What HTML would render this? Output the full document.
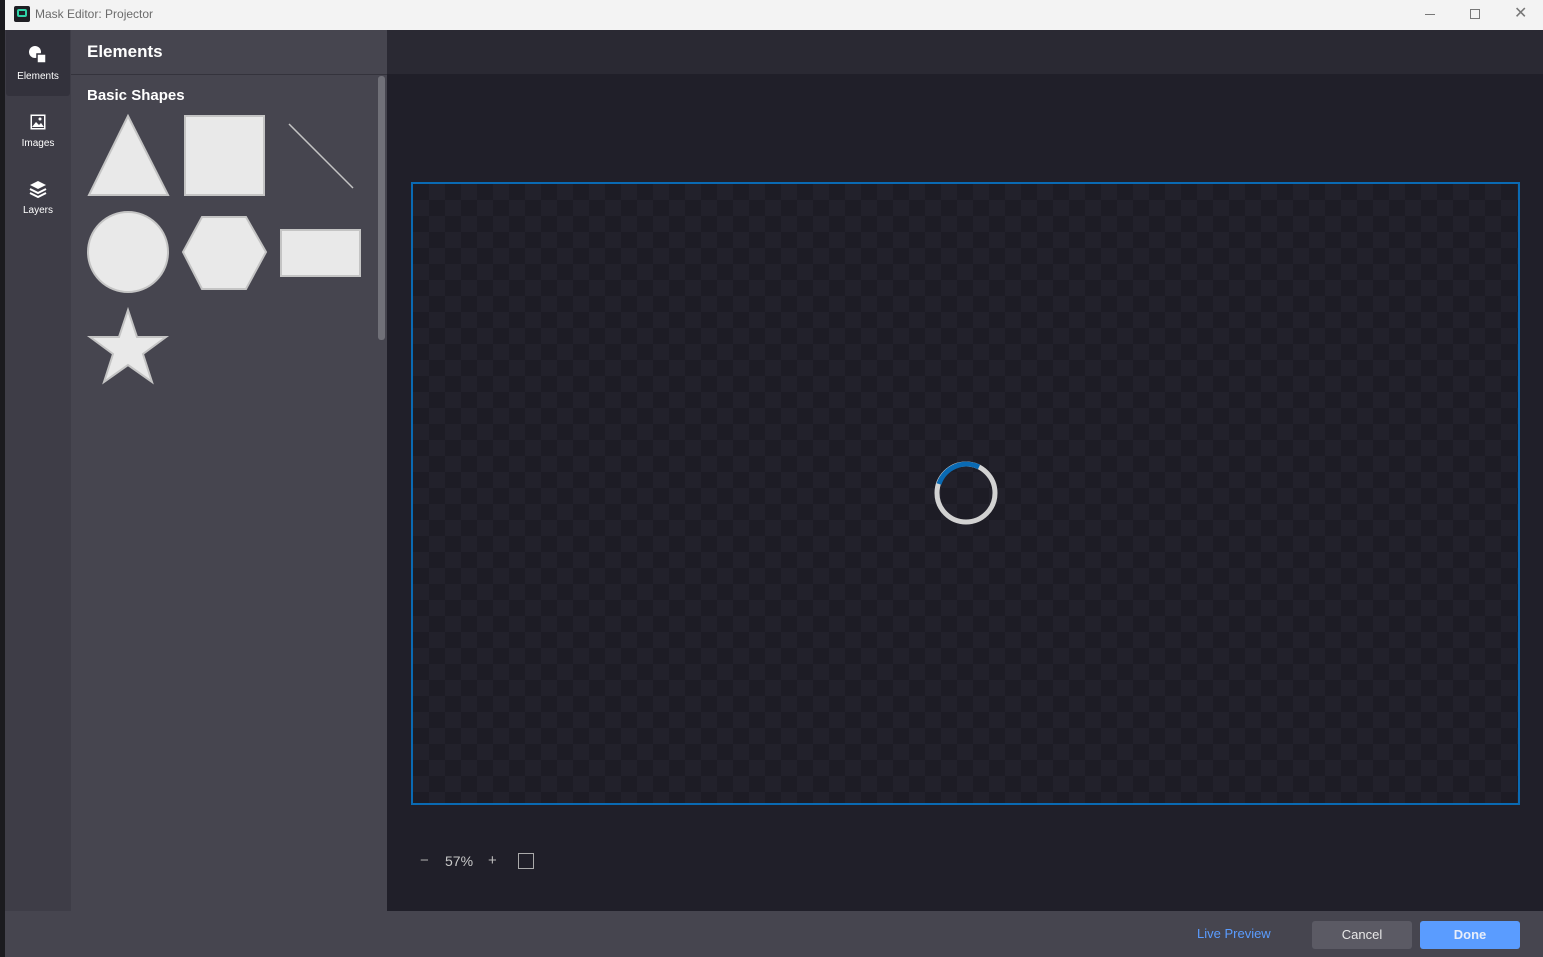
<!DOCTYPE html>
<html><head><meta charset="utf-8"><style>
*{margin:0;padding:0;box-sizing:border-box}
body{width:1543px;height:957px;overflow:hidden;background:#f3f3f3;font-family:"Liberation Sans",sans-serif;position:relative}
.abs{position:absolute}
</style></head><body>
<div class="abs" style="left:0;top:0;width:5px;height:957px;background:#1b1b1f"></div>
<div class="abs" style="left:5px;top:0;width:1538px;height:30px;background:#f3f3f3"></div>
<div class="abs" style="left:14px;top:6px;width:16px;height:16px;background:#1f1f24;border-radius:2px">
 <div class="abs" style="left:3px;top:3px;width:10px;height:8px;border:2px solid #2fd4a8;border-radius:2px"></div></div>
<div class="abs" style="left:35px;top:7px;font-size:12px;color:#6b6b6b">Mask Editor: Projector</div>
<div class="abs" style="left:1425px;top:14px;width:10px;height:1px;background:#777"></div>
<div class="abs" style="left:1470px;top:9px;width:10px;height:10px;border:1px solid #777"></div>
<div class="abs" style="left:1514px;top:3px;font-size:16px;color:#777">✕</div>

<div class="abs" style="left:5px;top:30px;width:66px;height:881px;background:#3e3d47"></div>
<div class="abs" style="left:6px;top:30px;width:64px;height:66px;background:#33323c;border-radius:0 0 3px 3px"></div>
<svg class="abs" style="left:28px;top:45px" width="20" height="20"><circle cx="7" cy="7" r="6" fill="#fff"/><rect x="9" y="9" width="9" height="9" fill="#fff" stroke="#33323c" stroke-width="1.5"/></svg>
<div class="abs" style="left:6px;top:71px;width:64px;text-align:center;font-size:10px;color:#fff">Elements</div>
<svg class="abs" style="left:30px;top:114px" width="16" height="16"><rect x="0.5" y="0.5" width="15" height="15" fill="#fff"/><rect x="2" y="2" width="12" height="12" fill="#3e3d47"/><path d="M2 13 L6 8 L9 11 L11 9 L14 13Z" fill="#fff"/><circle cx="10" cy="5" r="1.5" fill="#fff"/></svg>
<div class="abs" style="left:6px;top:138px;width:64px;text-align:center;font-size:10px;color:#fff">Images</div>
<svg class="abs" style="left:29px;top:180px" width="18" height="18"><path d="M9 1 L17 5 L9 9 L1 5Z" fill="#fff"/><path d="M1 9 L9 13 L17 9" fill="none" stroke="#fff" stroke-width="2"/><path d="M1 13 L9 17 L17 13" fill="none" stroke="#fff" stroke-width="2"/></svg>
<div class="abs" style="left:6px;top:205px;width:64px;text-align:center;font-size:10px;color:#fff">Layers</div>

<div class="abs" style="left:71px;top:30px;width:316px;height:881px;background:#46454f"></div>
<div class="abs" style="left:71px;top:74px;width:316px;height:1px;background:#34333c"></div>
<div class="abs" style="left:87px;top:42px;font-size:17px;font-weight:bold;color:#fff">Elements</div>
<div class="abs" style="left:87px;top:87px;font-size:15px;font-weight:bold;color:#fff">Basic Shapes</div>
<div class="abs" style="left:378px;top:76px;width:7px;height:264px;background:#707078;border-radius:3px"></div>
<svg class="abs" style="left:80px;top:110px" width="290" height="280">
 <g fill="#e9e9e9" stroke="#c4c4c4" stroke-width="2">
 <polygon points="48,6 88,85 9,85"/>
 <rect x="105" y="6" width="79" height="79"/>
 <line x1="209" y1="14" x2="273" y2="78" stroke-width="1.5"/>
 <circle cx="48" cy="142" r="40"/>
 <polygon points="122,107 166,107 186,142 166,179 122,179 103,142"/>
 <rect x="201" y="120" width="79" height="46"/>
 <polygon points="48,200 57,227 86,227 63,244 72,272 48,255 24,272 33,244 10,227 39,227"/>
 </g></svg>

<div class="abs" style="left:387px;top:30px;width:1156px;height:44px;background:#2a2933"></div>
<div class="abs" style="left:387px;top:74px;width:1156px;height:837px;background:#201f29"></div>
<div class="abs" style="left:411px;top:182px;width:1109px;height:623px;border:2px solid #0a6ab3;background-color:#1d1c25;background-image:linear-gradient(45deg,#22212b 25%,transparent 25%,transparent 75%,#22212b 75%),linear-gradient(45deg,#22212b 25%,transparent 25%,transparent 75%,#22212b 75%);background-size:32px 32px;background-position:0 0,16px 16px"></div>
<svg class="abs" style="left:932px;top:459px" width="68" height="68"><circle cx="34" cy="34" r="29" fill="none" stroke="#d2d2d2" stroke-width="5"/><path d="M7 25 A29 29 0 0 1 47 8" fill="none" stroke="#0a6ab3" stroke-width="5"/></svg>
<div class="abs" style="left:420px;top:852px;font-size:15px;color:#aaa">−</div>
<div class="abs" style="left:445px;top:853px;font-size:14px;color:#c8c8c8">57%</div>
<div class="abs" style="left:488px;top:852px;font-size:15px;color:#bbb">+</div>
<div class="abs" style="left:518px;top:853px;width:16px;height:16px;border:1.5px solid #aaa"></div>

<div class="abs" style="left:5px;top:911px;width:1538px;height:46px;background:#46454f"></div>
<div class="abs" style="left:1197px;top:926px;font-size:13px;color:#5a9cff">Live Preview</div>
<div class="abs" style="left:1312px;top:921px;width:100px;height:28px;background:#5b5a64;border-radius:3px;color:#e8e8e8;font-size:13px;text-align:center;line-height:27px">Cancel</div>
<div class="abs" style="left:1420px;top:921px;width:100px;height:28px;background:#5a9cff;border-radius:3px;color:#e8eefa;font-size:13px;font-weight:bold;text-align:center;line-height:27px">Done</div>
</body></html>
